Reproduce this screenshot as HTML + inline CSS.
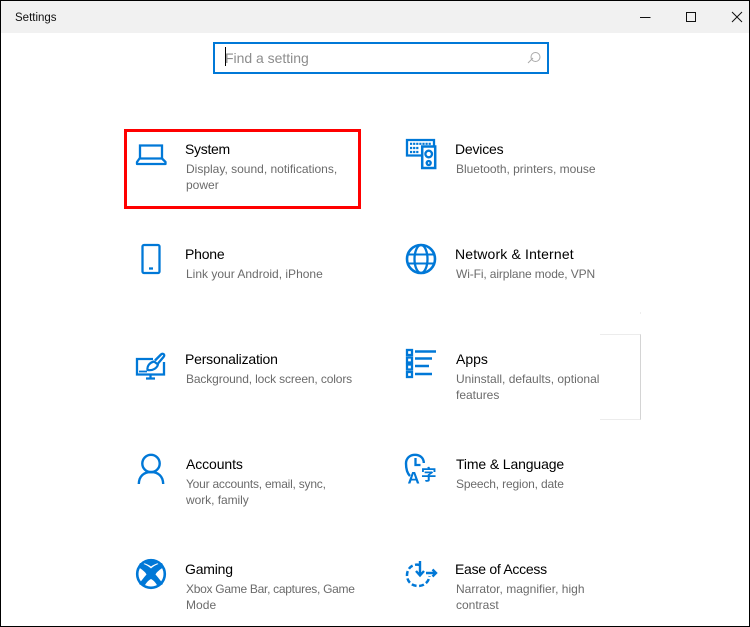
<!DOCTYPE html>
<html><head><meta charset="utf-8"><style>
html,body{margin:0;padding:0;background:#fff}
#w{position:relative;width:750px;height:627px;overflow:hidden;background:#fff;font-family:"Liberation Sans",sans-serif}
.a{position:absolute;white-space:nowrap}
.t{font-size:14px;line-height:18px;color:#000;letter-spacing:-.2px}
.s{font-size:12px;line-height:16px;color:#6b6b6b}
svg{position:absolute;left:0;top:0}
</style></head><body><div id="w">
<div class="a" style="left:0;top:0;width:750px;height:33px;background:#f1f1f1"></div>
<div class="a" style="left:15px;top:10px;font-size:11.5px;line-height:16px;color:#111">Settings</div>
<div class="a" style="left:213px;top:42px;width:332px;height:28px;border:2px solid #0078d7"></div>
<div class="a" style="left:225px;top:47px;width:1px;height:19px;background:#000"></div>
<div class="a" style="left:225px;top:49px;font-size:14px;line-height:18px;color:#8d8d8d;letter-spacing:-.02px">Find a setting</div>
<div class="a" style="left:124px;top:129px;width:231px;height:74px;border:3px solid #f00"></div>
<div class="a" style="left:600px;top:334px;width:40px;height:84px;border-top:1px solid #ececec;border-right:1px solid #d4d4d4;border-bottom:1px solid #ececec"></div>
<div class="a" style="left:640px;top:312px;width:1px;height:2px;background:#eee"></div>

<div class="a t" style="left:185px;top:140px;letter-spacing:-.3px">System</div>
<div class="a s" style="left:186px;top:161px">Display, sound, notifications,<br>power</div>
<div class="a t" style="left:455px;top:140px">Devices</div>
<div class="a s" style="left:456px;top:161px;letter-spacing:-.02px">Bluetooth, printers, mouse</div>
<div class="a t" style="left:185px;top:245px">Phone</div>
<div class="a s" style="left:186px;top:266px">Link your Android, iPhone</div>
<div class="a t" style="left:455px;top:245px;letter-spacing:.16px">Network &amp; Internet</div>
<div class="a s" style="left:456px;top:266px;letter-spacing:-.12px">Wi-Fi, airplane mode, VPN</div>
<div class="a t" style="left:185px;top:350px">Personalization</div>
<div class="a s" style="left:186px;top:371px;letter-spacing:-.13px">Background, lock screen, colors</div>
<div class="a t" style="left:456px;top:350px;letter-spacing:0">Apps</div>
<div class="a s" style="left:456px;top:371px">Uninstall, defaults, optional<br>features</div>
<div class="a t" style="left:186px;top:455px;letter-spacing:-.1px">Accounts</div>
<div class="a s" style="left:186px;top:476px;letter-spacing:-.22px">Your accounts, email, sync,<br><span style="letter-spacing:-.05px">work, family</span></div>
<div class="a t" style="left:456px;top:455px;letter-spacing:-.13px">Time &amp; Language</div>
<div class="a s" style="left:456px;top:476px;letter-spacing:-.15px">Speech, region, date</div>
<div class="a t" style="left:185px;top:560px">Gaming</div>
<div class="a s" style="left:186px;top:581px;letter-spacing:-.28px">Xbox Game Bar, captures, Game<br><span style="letter-spacing:.05px">Mode</span></div>
<div class="a t" style="left:455px;top:560px;letter-spacing:-.28px">Ease of Access</div>
<div class="a s" style="left:456px;top:581px;letter-spacing:.02px">Narrator, magnifier, high<br><span style="letter-spacing:0">contrast</span></div>

<svg width="750" height="627" viewBox="0 0 750 627" fill="none">
<!-- window controls -->
<g stroke="#111" stroke-width="1">
<path d="M640 17.5H650.5"/><rect x="686.5" y="12.5" width="9" height="9"/><path d="M732 12L742 22M742 12L732 22"/>
</g>
<path d="M528 63L533 58" stroke="#aaa"/><circle cx="535.5" cy="57" r="4.500" stroke="#aaa"/>
<g stroke="#0078d7" stroke-width="2.300">
<!-- laptop -->
<path d="M140 158V145.500H162V158"/><path d="M139.500 158.500H162L165.500 162V164H137V162Z" stroke-linejoin="round"/>
<!-- devices -->
<path d="M434 146V140H407V155.500H421"/>
<path d="M410 143.800H431M410 148H419M410 152H419" stroke-dasharray="2.200 .9" stroke-width="2.200"/>
<rect x="422.200" y="146.500" width="13" height="21.500" stroke-width="2.500"/>
<circle cx="428.700" cy="154" r="3.300"/><circle cx="428.700" cy="163" r="2"/>
<!-- phone -->
<rect x="142.500" y="245" width="17" height="28" rx="1.500"/><path d="M149 268.500H153"/>
<!-- globe -->
<circle cx="421" cy="259" r="14" stroke-width="2.600"/><ellipse cx="421" cy="259" rx="6.500" ry="14"/><path d="M408 254.500H434M408 263.500H434" stroke-width="2"/>
<!-- personalization -->
<path d="M153 359H137V374.500H164V362"/><path d="M150.500 375V378M146 378.500H155"/>
<path d="M139 371.500H147" stroke-width="1.800"/>
<path d="M155 360.500L161 354.500C163 352.500 165.500 355 163.500 357L158 363.500" stroke-width="2.300" stroke-linejoin="round"/>
<path d="M147.500 370C147 365.500 150 362.500 154 361.500L158 364.500C157 368 153 371 147.500 370Z" stroke-width="2.200" stroke-linejoin="round"/>
<!-- apps -->
<path d="M415 351.500H436M415 358.500H432M415 366H429M415 374H432" stroke-width="2.400"/>
<rect x="407" y="350" width="5" height="5"/><rect x="407" y="357.500" width="5" height="5"/><rect x="407" y="364.500" width="5" height="5"/><rect x="407" y="372" width="5" height="5"/>
<!-- accounts -->
<circle cx="151" cy="463.500" r="8.700" stroke-width="2.400"/><path d="M138.800 484C139 476 144 472 151 472C158 472 163 476 163.200 484" stroke-width="2.400"/>
<!-- gaming -->
<circle cx="151" cy="574" r="13.800" stroke-width="2.600"/>
<!-- time -->
<path d="M410 476C407 473 406 468.500 406 463.500C406 458 410 454.800 415 454.800C420 454.800 423.800 458 423.800 463" stroke-width="2.400"/><path d="M415.500 458V465H420.500"/>
<!-- ease -->
<path d="M420 565C411 563 407 570 407 575C407 582 412 586 418 586C424 586 429 582 429.500 576" stroke-dasharray="5 2.500" stroke-width="2.500"/>
<path d="M420 561V575M416 571L420 575.500L424 571M426 573H436M432.500 569.500L436 573L432.500 576.500" stroke-width="2.400"/>
</g>
<!-- gaming X -->
<path d="M140 563C145 564 149 566.500 151 568.500C153 566.500 157 564 162 563L164 567C160 569.500 157 571.500 155.500 574.500C158.500 578 161 581 163 584L158 587C156 583 154 580.500 151 579C148 580.500 146 583 144 587L139 584C141 581 143.500 578 146.500 574.500C145 571.500 142 569.500 138 567Z" fill="#0078d7"/>
<path d="M142 562.500C147 560 155 560 160 562.500C156 563.500 153 565 151 566.500C149 565 146 563.500 142 562.500Z" fill="#0078d7"/>
<!-- time text glyphs -->
<text x="407.500" y="483.500" font-family="Liberation Sans,sans-serif" font-weight="bold" font-size="17" fill="#0078d7">A</text>
<text x="421" y="480" font-family="Noto Sans CJK SC,sans-serif" font-weight="bold" font-size="15.500" fill="#0078d7">字</text>
</svg>
<!-- window border -->
<div class="a" style="left:0;top:0;width:748px;height:625px;border:1px solid #000"></div>
</div></body></html>
